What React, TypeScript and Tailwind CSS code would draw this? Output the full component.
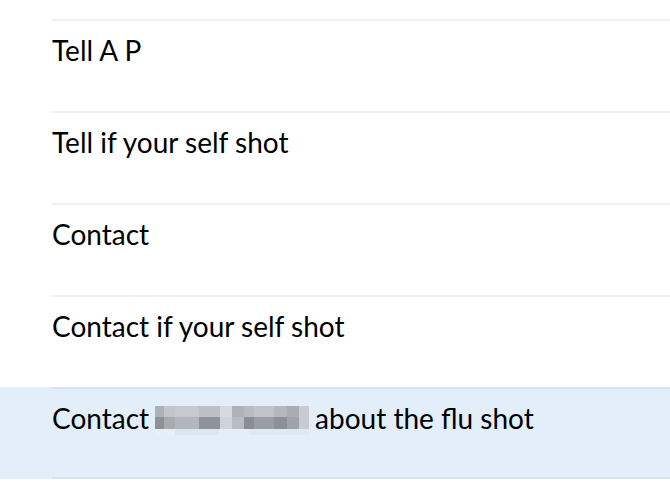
const items = [
  "Tell A P",
  "Tell if your self shot",
  "Contact",
  "Contact if your self shot",
];

// blurred name cells: [width, top colour, bottom colour]
const blurCells: Array<[number, string, string]> = [
  [9, "#aeb2b8", "#8e9298"],
  [11, "#c2c6cc", "#a8acb2"],
  [24, "#c6cad0", "#b3b7bd"],
  [21, "#bcc0c6", "#8f9399"],
  [12, "#d6dae0", "#cfd3da"],
  [12, "#afb3b9", "#b9bdc3"],
  [10, "#b8bcc2", "#8a8e94"],
  [20, "#c0c4ca", "#9a9ea4"],
  [13, "#b4b8be", "#8d9197"],
  [12, "#a9adb3", "#a0a4aa"],
  [10, "#c8ccd2", "#c8ccd2"],
];

function Blur() {
  return (
    <span className="flex flex-col mt-[4px] mx-[6px]">
      <span className="flex h-[11px]">
        {blurCells.map(([w, c], i) => (
          <span key={i} className="h-full" style={{ width: w, background: c }} />
        ))}
      </span>
      <span className="flex h-[12px]">
        {blurCells.map(([w, , c], i) => (
          <span key={i} className="h-full" style={{ width: w, background: c }} />
        ))}
      </span>
      <span className="flex h-[6px]">
        <span className="h-full w-[20px] bg-[#e9eff7]" />
        <span className="h-full w-[44px] bg-[#dde5ee]" />
        <span className="h-full w-[30px] bg-[#e6edf6]" />
        <span className="h-full w-[60px] bg-[#e0e8f1]" />
      </span>
    </span>
  );
}

export default function App() {
  return (
    <div
      className="w-[670px] h-[496px] overflow-hidden bg-white pt-[19px] text-[28px] text-black"
      style={{ fontFamily: "Lato, 'Liberation Sans', sans-serif" }}
    >
      {items.map((t) => (
        <div key={t} className="pl-[52px]">
          <div className="h-[92px] border-t-2 border-[#f0f0f0] pt-[13px] leading-[32px]">
            {t}
          </div>
        </div>
      ))}
      <div className="bg-[#e3eefb] pl-[52px]">
        <div className="h-[92px] border-t-2 border-b-2 border-[#d7e2ef] pt-[13px] leading-[32px] whitespace-nowrap flex items-start">
          <span>Contact</span>
          <Blur />
          <span>about the flu shot</span>
        </div>
      </div>
    </div>
  );
}
